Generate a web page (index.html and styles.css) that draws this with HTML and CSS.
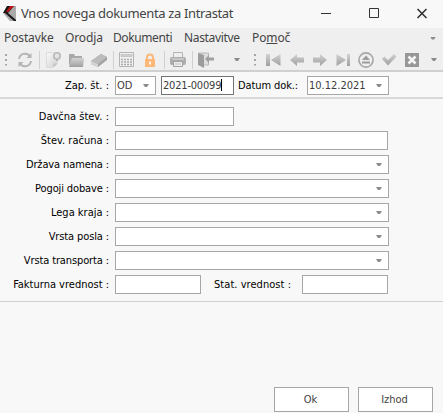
FILE: index.html
```html
<!DOCTYPE html>
<html lang="sl">
<head>
<meta charset="utf-8">
<title>Vnos novega dokumenta za Intrastat</title>
<link rel="stylesheet" href="styles.css">
</head>
<body>
<svg width="0" height="0" class="defs">
  <defs>
    <linearGradient id="g" x1="0" y1="0" x2="0" y2="1"><stop offset="0" stop-color="#d2d2d2"/><stop offset="1" stop-color="#a0a0a0"/></linearGradient>
    <linearGradient id="p" x1="0" y1="0" x2="1" y2="1"><stop offset="0" stop-color="#fafafa"/><stop offset="1" stop-color="#cfcfcf"/></linearGradient>
  </defs>
</svg>
<header class="titlebar">
  <svg class="logo" width="14" height="17" viewBox="0 0 14 17"><path d="M5 1h8v15H7L0 8z" fill="#aaa"/><path d="M4 1h7L5 8l8 7v1h-2L2 8H0z" fill="#171717"/><path d="M7 1h4L5 7H3z" fill="#c51414"/></svg>
  <h1>Vnos novega dokumenta za Intrastat</h1>
  <svg class="controls" width="108" height="12" viewBox="0 0 108 12" fill="none" stroke="#333"><path d="M0 6.500h10M48.500 1.500h9v9h-9z"/><path d="M96.500 2l9 9m0-9l-9 9" stroke-width="1.600"/></svg>
</header>
<nav class="menu">
  <span class="m1">Postavke</span><span class="m2">Orodja</span><span class="m3">Dokumenti</span><span class="m4">Nastavitve</span><span class="m5">Po<u>m</u>oč</span>
  <i class="caret"></i>
</nav>
<div class="toolbar">
  <i class="grip"></i>
  <svg class="icon refresh" viewBox="0 0 16 16" fill="none" stroke="#b4b4b4" stroke-width="2"><path d="M2 7a6 6 0 0 1 11-2.500M14 9a6 6 0 0 1-11 2.500"/><path d="M14.500 1v5h-5zM1.500 15v-5h5z" fill="#b4b4b4" stroke="none"/></svg>
  <i class="sep"></i>
  <svg class="icon" viewBox="0 0 16 16"><path d="M1.500.5h11v11l-4 4h-7z" fill="url(#p)" stroke="#dcdcdc"/><path d="M8.500 15.500v-4h4z" fill="#c4c4c4"/><circle cx="12" cy="4" r="3.200" fill="#e4e4e4" stroke="#b8b8b8" stroke-width="1.600"/><path d="M11 7.500h2v1.500h-2z" fill="#b4b4b4"/></svg>
  <svg class="icon" viewBox="0 0 16 16"><path d="M1 2h5l1 2h7v3H4l-3 7z" fill="#a8a8a8"/><path d="M4 6h12l-1 9H1z" fill="url(#g)"/></svg>
  <svg class="icon" viewBox="0 0 16 16"><path d="M10 2l6 3v3l-9 7-7-3V9z" fill="#a2a2a2"/><path d="M10 2l6 3-9 7-7-3z" fill="#bcbcbc"/><path d="M0 9l7 3v3l-7-3z" fill="#d4d4d4"/></svg>
  <i class="sep"></i>
  <svg class="icon" viewBox="0 0 16 16"><path d="M.5.500h14v14H.5z" fill="#f0f0f0" stroke="#b4b4b4"/><path d="M2 2.500h11v2H2z" fill="#d0d0d0" stroke="#b4b4b4" stroke-width=".6"/><path d="M2 7.500h11M2 10h11M2 12.500h11" stroke="#acacac" stroke-width="1.500" stroke-dasharray="2 1"/></svg>
  <svg class="icon" viewBox="0 0 16 16"><path d="M5 8V5.500a3 3 0 0 1 6 0V8" fill="none" stroke="#fbb878" stroke-width="2"/><path d="M3 7h10v8H3z" fill="#fbb878"/><path d="M7.200 9.500h1.600v3H7.200z" fill="#fff"/></svg>
  <i class="sep"></i>
  <svg class="icon" viewBox="0 0 16 16"><path d="M3.500.5h9v6h-9z" fill="#eee" stroke="#b4b4b4"/><rect y="5" width="16" height="8" rx="2" fill="#adadad"/><path d="M2 7h12" stroke="#ddd"/><path d="M3.500 9.500h9v5h-9z" fill="#eee" stroke="#a2a2a2"/><path d="M5 12h6" stroke="#c0c0c0"/></svg>
  <i class="sep"></i>
  <svg class="icon" viewBox="0 0 16 16"><path d="M.5 1h10v12H6" fill="#dedede" stroke="#b8b8b8"/><path d="M0 1l6 2v13l-6-3z" fill="#9c9c9c"/><path d="M7 7l4-4v2.500h5v3h-5V11z" fill="#a0a0a0"/></svg>
  <i class="caret c1"></i>
  <i class="grip g2"></i>
  <svg class="icon first" viewBox="0 0 16 16"><path d="M0 2h4v12H0zM14.500 2v12L5 8z" fill="url(#g)"/></svg>
  <svg class="icon" viewBox="0 0 16 16"><path d="M1 8l7-6v3.500h7v5H8V14z" fill="url(#g)"/></svg>
  <svg class="icon" viewBox="0 0 16 16"><path d="M15 8L8 2v3.500H1v5h7V14z" fill="url(#g)"/></svg>
  <svg class="icon" viewBox="0 0 16 16"><path d="M12 2h3v12h-3zM1.500 2v12l9.500-6z" fill="url(#g)"/></svg>
  <svg class="icon" viewBox="0 0 16 16"><circle cx="8" cy="8" r="7.100" fill="#eee" stroke="#a6a6a6" stroke-width="1.600"/><path d="M8 3.500L12 8H4zM4 9.500h8v2H4z" fill="#9c9c9c"/></svg>
  <svg class="icon" viewBox="0 0 16 16"><path d="M1 7l2.500-2.500L7 8l6-6 2.500 2.500L7 13.500z" fill="url(#g)"/></svg>
  <svg class="icon" viewBox="0 0 16 16"><path d="M1 1h14v14H1z" fill="#979797"/><path d="M4.500 4.500l7 7m0-7l-7 7" stroke="#f5f5f5" stroke-width="2.600"/></svg>
  <i class="caret c2"></i>
</div>
<div class="docbar">
  <label class="lab">Zap. št. :</label>
  <div class="box combo od"><span>OD</span><i class="caret"></i></div>
  <div class="box number"><span>2021-00099</span><i class="cursor"></i></div>
  <label class="datelab">Datum dok.:</label>
  <div class="box combo date"><span>10.12.2021</span><i class="caret"></i></div>
</div>
<main class="form">
  <div class="row"><label class="lab">Davčna štev. :</label><div class="box short"></div></div>
  <div class="row"><label class="lab">Štev. računa :</label><div class="box long"></div></div>
  <div class="row"><label class="lab tight">Država namena :</label><div class="box combo wide"><i class="caret"></i></div></div>
  <div class="row"><label class="lab tight">Pogoji dobave :</label><div class="box combo wide"><i class="caret"></i></div></div>
  <div class="row"><label class="lab">Lega kraja :</label><div class="box combo wide"><i class="caret"></i></div></div>
  <div class="row"><label class="lab tight">Vrsta posla :</label><div class="box combo wide"><i class="caret"></i></div></div>
  <div class="row"><label class="lab tight">Vrsta transporta :</label><div class="box combo wide"><i class="caret"></i></div></div>
  <div class="row"><label class="lab">Fakturna vrednost :</label><div class="box value"></div><label class="stat">Stat. vrednost :</label><div class="box value"></div></div>
</main>
<footer class="actions"><button>Ok</button><button>Izhod</button></footer>
</body>
</html>
```
FILE: styles.css
```css
* { box-sizing: border-box; }
body { margin: 0; width: 443px; height: 413px; overflow: hidden; background: #f8f8f8; display: flex; flex-direction: column; font: 11px/19px "DejaVu Sans Condensed", "Noto Sans", sans-serif; color: #000; white-space: nowrap; }
.defs { position: absolute; }
.titlebar { height: 28px; display: flex; align-items: center; padding-left: 3px; color: #444; }
.logo { margin-right: 4px; margin-top: -2px; }
.titlebar h1 { margin: 0; width: 300px; font: 13px/26px "Noto Sans", sans-serif; letter-spacing: -.36px; padding-bottom: 3px; }
.controls { margin-top: -2px; }
.menu { height: 20px; background: #efefef; display: flex; align-items: center; padding-left: 4px; font: 12px/20px "Noto Sans", sans-serif; letter-spacing: -.12px; color: #444; }
.m1 { width: 61px; }
.m2 { width: 48px; }
.m3 { width: 71px; letter-spacing: -.4px; }
.m4 { width: 68px; letter-spacing: -.35px; }
.m5 { width: 178px; }
.caret { flex: none; width: 6px; height: 3px; background: #8c8c8c; clip-path: polygon(0 0, 100% 0, 67% 100%, 33% 100%); }
.toolbar { height: 24px; background: #efefef; border-bottom: 2px solid #d0d0d0; display: flex; align-items: center; padding: 1px 0 0 5px; }
.icon { flex: none; width: 16px; height: 16px; margin-right: 7px; }
.refresh { margin-left: 9px; }
.sep { flex: none; width: 1px; height: 18px; background: #d0d0d0; margin: 0 5px 0 -1px; }
.grip { flex: none; width: 3px; height: 12px; background: repeating-linear-gradient(#a5a5a5 0 2px, transparent 2px 5px); clip-path: inset(0 1px 0 0); }
.c1 { margin-left: 13px; }
.g2 { margin-left: 14px; margin-right: 9px; }
.c2 { margin-left: 4px; }
.docbar { height: 27px; border-bottom: 2px solid #d8d8d8; display: flex; align-items: flex-start; padding-top: 4px; }
.lab { flex: none; width: 115px; padding-right: 6px; text-align: right; }
.tight { letter-spacing: -.12px; }
.box { flex: none; height: 19px; background: #fff; border: 1px solid #a6a6a6; line-height: 17px; color: #3c3c3c; }
.combo { display: flex; align-items: center; justify-content: flex-end; padding: 0 6px 0 1px; }
.combo span { margin-right: auto; }
.od { width: 41px; margin-right: 5px; }
.number { width: 73px; border-color: #747474; display: flex; padding-left: 1px; letter-spacing: -.2px; }
.cursor { width: 1px; height: 12px; margin-top: 2px; background: #000; }
.datelab { width: 73px; padding-left: 4px; letter-spacing: -.1px; }
.date { width: 82px; }
.form { height: 203px; padding-top: 8px; border-bottom: 1px solid #d0d0d0; }
.row { height: 24px; display: flex; }
.short { width: 119px; }
.long { width: 273px; }
.wide { width: 274px; }
.value { width: 86px; }
.stat { width: 101px; padding-left: 13px; letter-spacing: .05px; }
.actions { display: flex; justify-content: flex-end; gap: 9px; padding: 85px 10px 0 0; }
button { width: 75px; height: 25px; padding: 0 2px 0 0; border: 1px solid #a6a6a6; background: #fff; font: 11px/22px "DejaVu Sans Condensed", sans-serif; color: #444; }
```
